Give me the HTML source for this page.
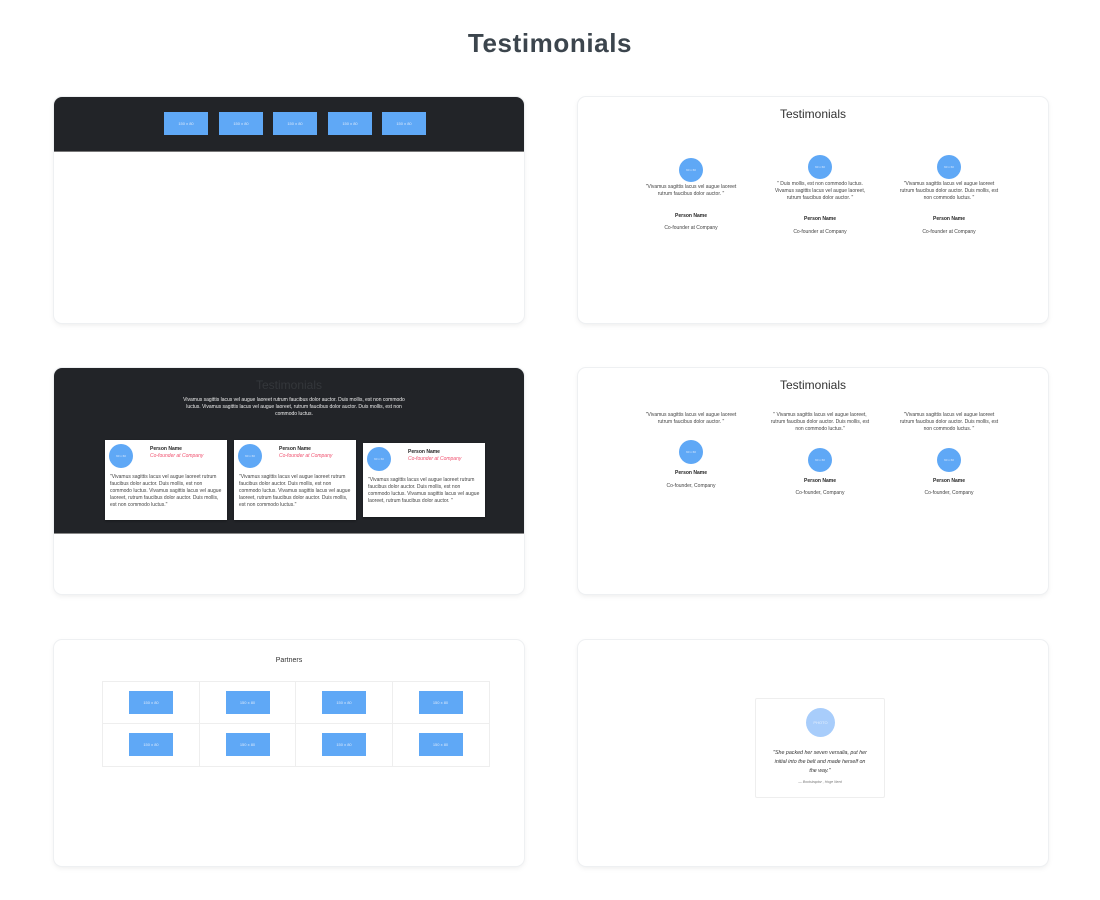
<!DOCTYPE html>
<html><head><meta charset="utf-8"><style>
*{margin:0;padding:0;box-sizing:border-box}
body{width:1100px;height:900px;background:#fff;position:relative;font-family:"Liberation Sans",sans-serif;overflow:hidden}
.a{position:absolute}
.card{position:absolute;width:470px;height:226px;background:#fff;border-radius:8px;box-shadow:0 0 0 1px #eef0f2,0 2px 6px rgba(0,0,0,.08);overflow:hidden}
.ph{position:absolute;background:#5fa8f6;color:#dbe9fb;font-size:4px;display:flex;align-items:center;justify-content:center}
.c{position:absolute;border-radius:50%;background:#5fa8f6;color:#dbe9fb;font-size:3px;display:flex;align-items:center;justify-content:center}
.t{position:absolute;text-align:center;font-size:5px;line-height:7px;color:#444}
.nm{position:absolute;text-align:center;font-size:5px;font-weight:bold;color:#222}
.tc{position:absolute;background:#fff;box-shadow:0 1px 2px rgba(0,0,0,.3)}
</style></head><body>
<div class="a" style="left:0;width:1100px;top:28px;text-align:center;font-size:26px;font-weight:bold;color:#3c454d;letter-spacing:0.6px">Testimonials</div>

<!-- card1 -->
<div class="card" style="left:54px;top:97px">
 <div class="a" style="left:0;top:0;width:470px;height:55px;background:#222428;border-bottom:1px solid #777"></div>
 <div class="ph" style="left:110px;top:15px;width:44px;height:23px">150 x 80</div>
 <div class="ph" style="left:165px;top:15px;width:44px;height:23px">150 x 80</div>
 <div class="ph" style="left:219px;top:15px;width:44px;height:23px">150 x 80</div>
 <div class="ph" style="left:274px;top:15px;width:44px;height:23px">150 x 80</div>
 <div class="ph" style="left:328px;top:15px;width:44px;height:23px">150 x 80</div>
</div>

<!-- card2 -->
<div class="card" style="left:578px;top:97px">
 <div class="a" style="left:0;width:470px;top:10px;text-align:center;font-size:12px;color:#333">Testimonials</div>
 <div class="c" style="left:101px;top:61px;width:24px;height:24px">60 x 60</div>
 <div class="c" style="left:230px;top:58px;width:24px;height:24px">60 x 60</div>
 <div class="c" style="left:359px;top:58px;width:24px;height:24px">60 x 60</div>
 <div class="t" style="left:63px;width:100px;top:87px">"Vivamus sagittis lacus vel augue laoreet rutrum faucibus dolor auctor. "</div>
 <div class="t" style="left:192px;width:100px;top:84px">" Duis mollis, est non commodo luctus. Vivamus sagittis lacus vel augue laoreet, rutrum faucibus dolor auctor. "</div>
 <div class="t" style="left:321px;width:100px;top:84px">"Vivamus sagittis lacus vel augue laoreet rutrum faucibus dolor auctor. Duis mollis, est non commodo luctus. "</div>
 <div class="nm" style="left:63px;width:100px;top:116px">Person Name</div>
 <div class="nm" style="left:192px;width:100px;top:119px">Person Name</div>
 <div class="nm" style="left:321px;width:100px;top:119px">Person Name</div>
 <div class="t" style="left:63px;width:100px;top:128px">Co-founder at Company</div>
 <div class="t" style="left:192px;width:100px;top:132px">Co-founder at Company</div>
 <div class="t" style="left:321px;width:100px;top:132px">Co-founder at Company</div>
</div>

<!-- card3 -->
<div class="card" style="left:54px;top:368px">
 <div class="a" style="left:0;top:0;width:470px;height:166px;background:#222428;border-bottom:1px solid #888"></div>
 <div class="a" style="left:0;width:470px;top:10px;text-align:center;font-size:12px;color:#34373b">Testimonials</div>
 <div class="t" style="left:128px;width:224px;top:29px;color:#eee">Vivamus sagittis lacus vel augue laoreet rutrum faucibus dolor auctor. Duis mollis, est non commodo luctus. Vivamus sagittis lacus vel augue laoreet, rutrum faucibus dolor auctor. Duis mollis, est non commodo luctus.</div>
 <div class="tc" style="left:51px;top:72px;width:122px;height:80px"></div>
 <div class="tc" style="left:180px;top:72px;width:122px;height:80px"></div>
 <div class="tc" style="left:309px;top:75px;width:122px;height:74px"></div>
 <div class="c" style="left:55px;top:76px;width:24px;height:24px">60 x 60</div>
 <div class="c" style="left:184px;top:76px;width:24px;height:24px">60 x 60</div>
 <div class="c" style="left:313px;top:79px;width:24px;height:24px">60 x 60</div>
 <div class="nm" style="left:96px;top:78px;text-align:left">Person Name</div>
 <div class="nm" style="left:225px;top:78px;text-align:left">Person Name</div>
 <div class="nm" style="left:354px;top:81px;text-align:left">Person Name</div>
 <div class="t" style="left:96px;top:85px;text-align:left;color:#f0506e;font-style:italic">Co-founder at Company</div>
 <div class="t" style="left:225px;top:85px;text-align:left;color:#f0506e;font-style:italic">Co-founder at Company</div>
 <div class="t" style="left:354px;top:88px;text-align:left;color:#f0506e;font-style:italic">Co-founder at Company</div>
 <div class="t" style="left:56px;width:114px;top:106px;text-align:left">"Vivamus sagittis lacus vel augue laoreet rutrum faucibus dolor auctor. Duis mollis, est non commodo luctus. Vivamus sagittis lacus vel augue laoreet, rutrum faucibus dolor auctor. Duis mollis, est non commodo luctus."</div>
 <div class="t" style="left:185px;width:114px;top:106px;text-align:left">"Vivamus sagittis lacus vel augue laoreet rutrum faucibus dolor auctor. Duis mollis, est non commodo luctus. Vivamus sagittis lacus vel augue laoreet, rutrum faucibus dolor auctor. Duis mollis, est non commodo luctus."</div>
 <div class="t" style="left:314px;width:114px;top:109px;text-align:left">"Vivamus sagittis lacus vel augue laoreet rutrum faucibus dolor auctor. Duis mollis, est non commodo luctus. Vivamus sagittis lacus vel augue laoreet, rutrum faucibus dolor auctor. "</div>
</div>

<!-- card4 -->
<div class="card" style="left:578px;top:368px">
 <div class="a" style="left:0;width:470px;top:10px;text-align:center;font-size:12px;color:#333">Testimonials</div>
 <div class="t" style="left:63px;width:100px;top:44px">"Vivamus sagittis lacus vel augue laoreet rutrum faucibus dolor auctor. "</div>
 <div class="t" style="left:192px;width:100px;top:44px">" Vivamus sagittis lacus vel augue laoreet, rutrum faucibus dolor auctor. Duis mollis, est non commodo luctus."</div>
 <div class="t" style="left:321px;width:100px;top:44px">"Vivamus sagittis lacus vel augue laoreet rutrum faucibus dolor auctor. Duis mollis, est non commodo luctus. "</div>
 <div class="c" style="left:101px;top:72px;width:24px;height:24px">60 x 60</div>
 <div class="c" style="left:230px;top:80px;width:24px;height:24px">60 x 60</div>
 <div class="c" style="left:359px;top:80px;width:24px;height:24px">60 x 60</div>
 <div class="nm" style="left:63px;width:100px;top:102px">Person Name</div>
 <div class="nm" style="left:192px;width:100px;top:110px">Person Name</div>
 <div class="nm" style="left:321px;width:100px;top:110px">Person Name</div>
 <div class="t" style="left:63px;width:100px;top:115px">Co-founder, Company</div>
 <div class="t" style="left:192px;width:100px;top:122px">Co-founder, Company</div>
 <div class="t" style="left:321px;width:100px;top:122px">Co-founder, Company</div>
</div>

<!-- card5 -->
<div class="card" style="left:54px;top:640px">
 <div class="a" style="left:0;width:470px;top:17px;text-align:center;font-size:7px;color:#333">Partners</div>
 <div class="a" style="left:48px;top:41px;width:388px;height:86px;border:1px solid #eee;display:grid;grid-template-columns:repeat(4,1fr);grid-template-rows:1fr 1fr">
  <div style="border-right:1px solid #eee;border-bottom:1px solid #eee;position:relative"><div class="ph" style="left:26px;top:9px;width:44px;height:23px">150 x 80</div></div>
  <div style="border-right:1px solid #eee;border-bottom:1px solid #eee;position:relative"><div class="ph" style="left:26px;top:9px;width:44px;height:23px">150 x 80</div></div>
  <div style="border-right:1px solid #eee;border-bottom:1px solid #eee;position:relative"><div class="ph" style="left:26px;top:9px;width:44px;height:23px">150 x 80</div></div>
  <div style="border-bottom:1px solid #eee;position:relative"><div class="ph" style="left:26px;top:9px;width:44px;height:23px">150 x 80</div></div>
  <div style="border-right:1px solid #eee;position:relative"><div class="ph" style="left:26px;top:9px;width:44px;height:23px">150 x 80</div></div>
  <div style="border-right:1px solid #eee;position:relative"><div class="ph" style="left:26px;top:9px;width:44px;height:23px">150 x 80</div></div>
  <div style="border-right:1px solid #eee;position:relative"><div class="ph" style="left:26px;top:9px;width:44px;height:23px">150 x 80</div></div>
  <div style="position:relative"><div class="ph" style="left:26px;top:9px;width:44px;height:23px">150 x 80</div></div>
 </div>
</div>

<!-- card6 -->
<div class="card" style="left:578px;top:640px">
 <div class="a" style="left:177px;top:58px;width:130px;height:100px;border:1px solid #eee;border-radius:2px"></div>
 <div class="c" style="left:228px;top:68px;width:29px;height:29px;background:#a8cdfb;color:#e4f0fe;font-size:4px">PHOTO</div>
 <div class="t" style="left:194px;width:96px;top:109px;font-style:italic;font-size:5.3px;line-height:9px;color:#333">"She packed her seven versalia, put her initial into the belt and made herself on the way."</div>
 <div class="t" style="left:190px;width:104px;top:139px;font-style:italic;font-size:3.5px;color:#777">— Bootstraptor , Hoge Nerd</div>
</div>
</body></html>
